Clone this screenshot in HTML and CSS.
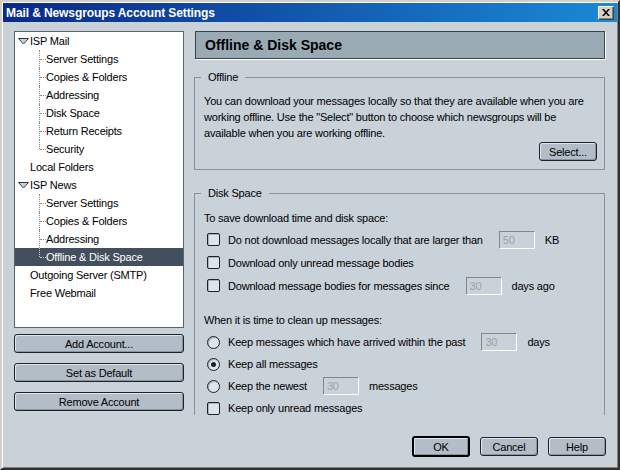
FILE: index.html
```html
<!DOCTYPE html>
<html>
<head>
<meta charset="utf-8">
<title>Mail &amp; Newsgroups Account Settings</title>
<link rel="stylesheet" href="styles.css">
</head>
<body>
<div class="window">
  <div class="titlebar">
    <span class="title">Mail &amp; Newsgroups Account Settings</span>
    <span class="close"><svg width="8" height="7" viewBox="0 0 8 7"><path d="M0 0L2 0L4 2.5L6 0L8 0L5 3.5L8 7L6 7L4 4.5L2 7L0 7L3 3.5Z" fill="#000"/></svg></span>
  </div>
  <div class="content">
    <div class="main">
      <div class="left">
        <div class="tree">
          <div class="row root"><svg class="twisty" width="11" height="7" viewBox="0 0 11 7"><path d="M0.5 0.5H10.5L5.5 6Z" fill="#c8d0d8" stroke="#30383f"/></svg>ISP Mail</div>
          <div class="row child">Server Settings</div>
          <div class="row child">Copies &amp; Folders</div>
          <div class="row child">Addressing</div>
          <div class="row child">Disk Space</div>
          <div class="row child">Return Receipts</div>
          <div class="row child last">Security</div>
          <div class="row top">Local Folders</div>
          <div class="row root"><svg class="twisty" width="11" height="7" viewBox="0 0 11 7"><path d="M0.5 0.5H10.5L5.5 6Z" fill="#c8d0d8" stroke="#30383f"/></svg>ISP News</div>
          <div class="row child">Server Settings</div>
          <div class="row child">Copies &amp; Folders</div>
          <div class="row child">Addressing</div>
          <div class="row child last selected">Offline &amp; Disk Space</div>
          <div class="row top">Outgoing Server (SMTP)</div>
          <div class="row top">Free Webmail</div>
        </div>
        <div class="btn side first">Add Account...</div>
        <div class="btn side">Set as Default</div>
        <div class="btn side">Remove Account</div>
      </div>
      <div class="right">
        <div class="header">Offline &amp; Disk Space</div>
        <fieldset class="group offline">
          <legend>Offline</legend>
          <p class="desc">You can download your messages locally so that they are available when you are working offline. Use the "Select" button to choose which newsgroups will be available when you are working offline.</p>
          <div class="btnrow"><div class="btn select">Select...</div></div>
        </fieldset>
        <fieldset class="group disk">
          <legend>Disk Space</legend>
          <div class="line">To save download time and disk space:</div>
          <div class="opt crow"><span class="check"></span><span class="lbl">Do not download messages locally that are larger than</span><span class="field">50</span><span>KB</span></div>
          <div class="opt crow"><span class="check"></span><span class="lbl">Download only unread message bodies</span></div>
          <div class="opt crow"><span class="check"></span><span class="lbl">Download message bodies for messages since</span><span class="field">30</span><span>days ago</span></div>
          <div class="line gap">When it is time to clean up messages:</div>
          <div class="opt rrow"><span class="radio"></span><span class="lbl">Keep messages which have arrived within the past</span><span class="field">30</span><span>days</span></div>
          <div class="opt rrow"><span class="radio on"></span><span class="lbl">Keep all messages</span></div>
          <div class="opt rrow"><span class="radio"></span><span class="lbl">Keep the newest</span><span class="field">30</span><span>messages</span></div>
          <div class="opt rrow"><span class="check"></span><span class="lbl">Keep only unread messages</span></div>
        </fieldset>
      </div>
    </div>
    <div class="footer">
      <div class="btn foot default">OK</div>
      <div class="btn foot">Cancel</div>
      <div class="btn foot">Help</div>
    </div>
  </div>
</div>
</body>
</html>
```
FILE: styles.css
```css
* { box-sizing: border-box; }
html, body { margin: 0; padding: 0; }
body {
  width: 620px;
  height: 470px;
  overflow: hidden;
  font-family: "Liberation Sans", Arial, sans-serif;
  font-size: 11px;
  letter-spacing: -0.2px;
  color: #000;
  background: #c9d1d9;
}
.window {
  width: 620px;
  height: 470px;
  display: flex;
  flex-direction: column;
  background: #c9d1d9;
  border-style: solid;
  border-width: 2px;
  border-color: #d4d0c8 #303030 #303030 #d4d0c8;
  padding: 1px;
  box-shadow: inset 1px 1px #ffffff, inset -1px -1px #808080;
}
.titlebar {
  height: 19px;
  flex: none;
  display: flex;
  align-items: center;
  justify-content: space-between;
  padding: 0 3px 0 3px;
  background: linear-gradient(to right, #0a2888, #1a8ad6);
  color: #fff;
}
.title { font-weight: bold; font-size: 12px; letter-spacing: -0.1px; }
.close {
  width: 16px;
  height: 14px;
  display: flex;
  align-items: center;
  justify-content: center;
  background: #d4d0c8;
  border: 1px solid;
  border-color: #ffffff #404040 #404040 #ffffff;
  box-shadow: inset -1px -1px #808080;
}
.content {
  flex: 1;
  display: flex;
  flex-direction: column;
  padding: 9px 11px 10px 11px;
}
.main {
  height: 384px;
  display: flex;
  gap: 10px;
}
.left {
  width: 170px;
  flex: none;
  display: flex;
  flex-direction: column;
}
.tree {
  height: 297px;
  background: #fff;
  border: 1px solid #5b636b;
  flex: none;
}
.row {
  height: 18px;
  line-height: 18px;
  white-space: nowrap;
  position: relative;
}
.row.top { padding-left: 15px; }
.row.root { padding-left: 3px; }
.twisty { margin-right: 1px; vertical-align: 0px; }
.row.child { padding-left: 31px; }
.row.child::before {
  content: "";
  position: absolute;
  left: 24px;
  top: 0;
  height: 18px;
  border-left: 1px dotted #8a8a8a;
}
.row.child.last::before { height: 9px; }
.row.child::after {
  content: "";
  position: absolute;
  left: 25px;
  top: 9px;
  width: 6px;
  border-top: 1px dotted #8a8a8a;
}
.row.selected { background: #434e5e; color: #fff; }
.row.selected::before, .row.selected::after { border-color: #c8d0d8; }
.btn {
  display: flex;
  align-items: center;
  justify-content: center;
  height: 19px;
  border: 1px solid #1c2228;
  border-radius: 3px;
  background: #b3bdc7;
  box-shadow: inset 1px 1px #e0e6eb, inset -1px -1px #8a949d;
  white-space: nowrap;
}
.btn.side { margin-top: 10px; }
.btn.side.first { margin-top: 6px; }
.right {
  flex: 1;
  height: 384px;
  overflow: hidden;
}
.header {
  height: 28px;
  margin: 0 1px 0 1px;
  border: 1px solid #3a444e;
  box-shadow: 1px 1px 0 #ffffff;
  background: #9aaab4;
  font-weight: bold;
  font-size: 14px;
  letter-spacing: 0;
  line-height: 26px;
  padding-left: 9px;
}
.group {
  margin: 0 1px 0 0;
  border: 1px solid #8a939c;
  padding: 9px 7px 8px 9px;
  min-width: 0;
}
.group legend {
  padding: 0 7px;
  margin-left: -3px;
  line-height: 14px;
}
.offline { margin-top: 11px; }
.disk { margin-top: 16px; padding-top: 10px; }
.desc { margin: 0; line-height: 16px; }
.btnrow { display: flex; justify-content: flex-end; margin-top: 1px; }
.btn.select { width: 58px; }
.line { line-height: 16px; height: 16px; }
.line.gap { margin-top: 15px; }
.opt {
  display: flex;
  align-items: center;
  white-space: nowrap;
  padding-left: 3px;
}
.crow { height: 23px; }
.line + .crow { margin-top: 2px; }
.rrow { height: 22px; }
.line + .rrow { margin-top: 3px; }
.check {
  width: 13px;
  height: 13px;
  flex: none;
  border: 1px solid #1c2228;
  border-radius: 2px;
  background: #dde4ea;
  box-shadow: inset 1px 1px #a9b2bb;
}
.radio {
  width: 13px;
  height: 13px;
  flex: none;
  border: 1px solid #1c2228;
  border-radius: 50%;
  background: #dde4ea;
  box-shadow: inset 1px 1px #a9b2bb;
  display: flex;
  align-items: center;
  justify-content: center;
}
.radio.on::after {
  content: "";
  width: 5px;
  height: 5px;
  border-radius: 50%;
  background: #1c2228;
}
.lbl { margin-left: 8px; }
.field {
  width: 36px;
  height: 18px;
  margin: 0 10px 0 16px;
  border: 1px solid;
  border-color: #7f8890 #ffffff #ffffff #7f8890;
  color: #9aa3ab;
  padding-left: 3px;
  line-height: 16px;
}
.footer {
  margin-top: 21px;
  height: 21px;
  display: flex;
  justify-content: flex-end;
  align-items: center;
  gap: 10px;
}
.btn.foot { width: 58px; }
.btn.default { border: 2px solid #000; height: 21px; }
```
